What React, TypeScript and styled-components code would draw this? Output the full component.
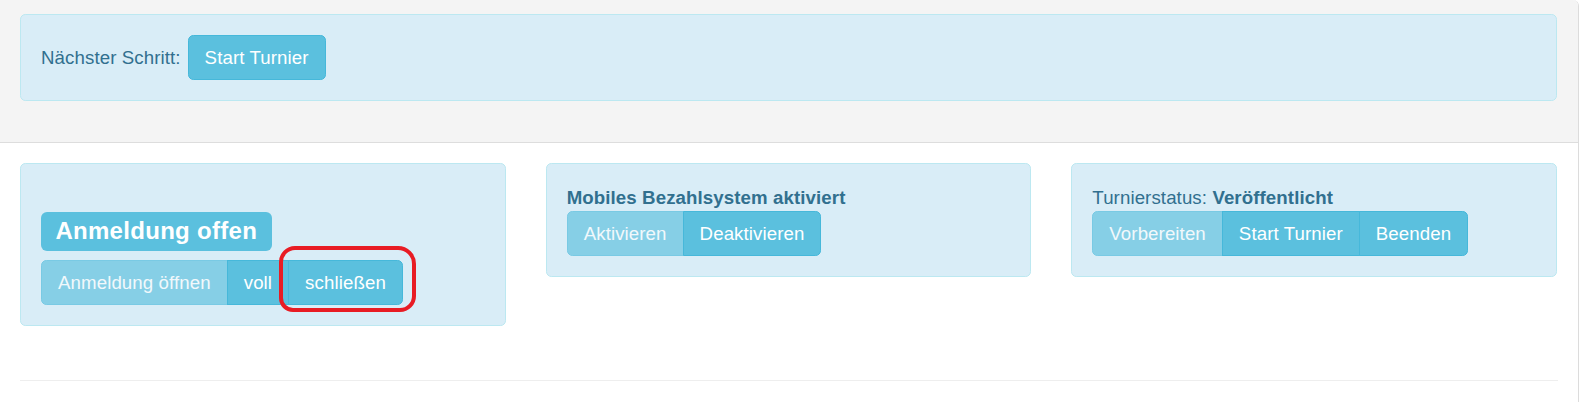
import React from 'react';
import styled, { createGlobalStyle, css } from 'styled-components';

const GlobalStyle = createGlobalStyle`
  html, body {
    margin: 0;
    padding: 0;
    background: #fff;
  }
  body {
    font-family: "Liberation Sans", Arial, sans-serif;
    font-size: 18.67px;
    line-height: 27px;
    color: #333;
  }
  * {
    box-sizing: border-box;
  }
`;

const Frame = styled.div`
  width: 1579px;
  min-height: 402px;
  border-right: 1px solid #dcdcdc;
  border-top-right-radius: 6px;
  overflow: hidden;
`;

const TopSection = styled.section`
  background: #f4f4f4;
  padding: 14px 21px 41px 20px;
  border-bottom: 1px solid #dddddd;
`;

const MainSection = styled.section`
  padding: 20px 20px 0 20px;
`;

const Alert = styled.div<{ $inline?: boolean }>`
  background: #d9edf7;
  border: 1px solid #bce8f1;
  border-radius: 5.33px;
  color: #31708f;
  padding: 20px;
  letter-spacing: 0.1px;

  ${({ $inline }) =>
    $inline &&
    css`
      display: flex;
      align-items: center;
      gap: 7px;
    `}
`;

const Columns = styled.div`
  display: grid;
  grid-template-columns: repeat(3, 1fr);
  column-gap: 40px;
  align-items: start;
  margin-right: 1px;
  margin-bottom: 54px;
`;

const Heading = styled.h3`
  margin: 27px 0 14px;
  font-size: 32px;
  line-height: 1.1;
  font-weight: 500;
`;

const Label = styled.span`
  background: #5bc0de;
  color: #fff;
  font-size: 75%;
  font-weight: bold;
  line-height: 1;
  letter-spacing: 0.3px;
  padding: 4.8px 14.4px 7.2px;
  border-radius: 6px;
`;

const Strong = styled.strong`
  font-weight: bold;
`;

const ButtonGroup = styled.div`
  display: inline-flex;
  vertical-align: middle;

  & > button + button {
    margin-left: -1px;
  }
  & > button:not(:first-child) {
    border-top-left-radius: 0;
    border-bottom-left-radius: 0;
  }
  & > button:not(:last-child) {
    border-top-right-radius: 0;
    border-bottom-right-radius: 0;
  }
`;

const Button = styled.button<{ $marked?: boolean }>`
  position: relative;
  font-family: inherit;
  font-size: 18.67px;
  line-height: 27px;
  letter-spacing: 0.1px;
  padding: 8px 16px;
  color: #fff;
  background: #5bc0de;
  border: 1px solid #46b8da;
  border-radius: 5.33px;
  white-space: nowrap;
  cursor: pointer;

  &:disabled {
    opacity: 0.65;
    cursor: not-allowed;
  }

  ${({ $marked }) =>
    $marked &&
    css`
      &::after {
        content: '';
        position: absolute;
        left: -10px;
        top: -15px;
        right: -14px;
        bottom: -8px;
        border: 4px solid #e81c24;
        border-radius: 16px 18px 16px 14px;
        pointer-events: none;
      }
    `}
`;

const Rule = styled.hr`
  margin: 0;
  border: 0;
  border-top: 1px solid #eeeeee;
  width: 1538px;
`;

export default function App() {
  return (
    <>
      <GlobalStyle />
      <Frame>
        <TopSection>
          <Alert $inline>
            <span>Nächster Schritt:</span>
            <Button>Start Turnier</Button>
          </Alert>
        </TopSection>

        <MainSection>
          <Columns>
            <Alert>
              <Heading>
                <Label>Anmeldung offen</Label>
              </Heading>
              <ButtonGroup>
                <Button disabled>Anmeldung öffnen</Button>
                <Button>voll</Button>
                <Button $marked>schließen</Button>
              </ButtonGroup>
            </Alert>

            <Alert>
              <div>
                <Strong>Mobiles Bezahlsystem aktiviert</Strong>
              </div>
              <ButtonGroup>
                <Button disabled>Aktivieren</Button>
                <Button>Deaktivieren</Button>
              </ButtonGroup>
            </Alert>

            <Alert>
              <div>
                Turnierstatus: <Strong>Veröffentlicht</Strong>
              </div>
              <ButtonGroup>
                <Button disabled>Vorbereiten</Button>
                <Button>Start Turnier</Button>
                <Button>Beenden</Button>
              </ButtonGroup>
            </Alert>
          </Columns>
          <Rule />
        </MainSection>
      </Frame>
    </>
  );
}
